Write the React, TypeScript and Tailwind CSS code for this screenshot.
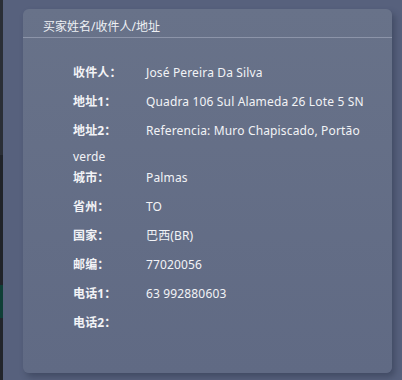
import React from 'react';

const rows: { label: string; value: string; extra?: string }[] = [
  { label: '收件人：', value: 'José Pereira Da Silva' },
  { label: '地址1：', value: 'Quadra 106 Sul Alameda 26 Lote 5 SN' },
  { label: '地址2：', value: 'Referencia: Muro Chapiscado, Portão', extra: 'verde' },
  { label: '城市：', value: 'Palmas' },
  { label: '省州：', value: 'TO' },
  { label: '国家：', value: '巴西(BR)' },
  { label: '邮编：', value: '77020056' },
  { label: '电话1：', value: '63 992880603' },
  { label: '电话2：', value: '' },
];

const App: React.FC = () => {
  return (
    <div
      className="w-[402px] h-[380px] flex bg-[#57617d] overflow-hidden text-[12px] text-[#f2f3f6]"
      style={{ fontFamily: '"Noto Sans", "Noto Sans CJK SC", sans-serif' }}
    >
      <div className="w-[3px] h-full flex flex-col bg-[#252930]">
        <div className="h-[155px] bg-[#2a2e36]" />
        <div className="h-[130px] bg-[#202329]" />
        <div className="h-[33px] bg-[#0f3f37]" />
        <div className="flex-1 bg-[#22252b]" />
      </div>
      <div className="pl-[20px] pt-[9px]">
        <div className="w-[369px] h-[364px] rounded-[6px] bg-gradient-to-b from-[#687289] to-[#606a84] shadow-[3px_4px_6px_rgba(40,48,72,0.45)]">
          <div className="h-[29px] flex items-center pl-[20px] pt-[7px] border-b border-[#8c94a9] text-[#eef0f4]">
            买家姓名/收件人/地址
          </div>
          <div className="pl-[50px] pt-[20px] tracking-[0.15px]">
            {rows.map((r) => (
              <div key={r.label}>
                <div className="h-[29px] flex items-center">
                  <span className="w-[73px] font-bold">{r.label}</span>
                  <span>{r.value}</span>
                </div>
                {r.extra && <div className="mt-[5px] leading-[14px] -mb-[1px]">{r.extra}</div>}
              </div>
            ))}
          </div>
        </div>
      </div>
    </div>
  );
};

export default App;
